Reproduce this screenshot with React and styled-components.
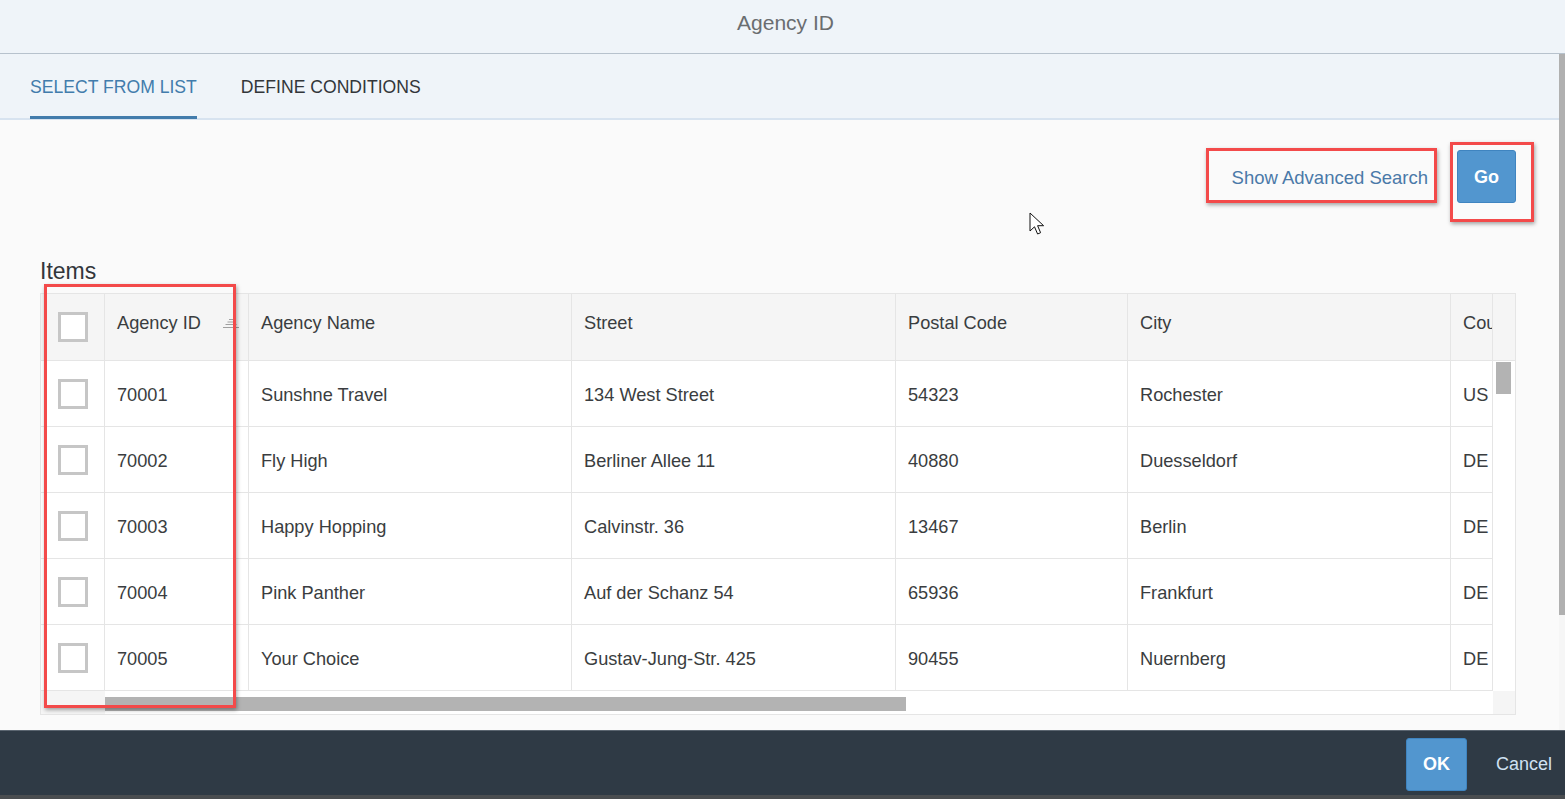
import React from 'react';
import styled, { createGlobalStyle } from 'styled-components';

const GlobalStyle = createGlobalStyle`
  html, body { margin: 0; padding: 0; }
  body { font-family: "Liberation Sans", Arial, sans-serif; overflow: hidden; background: #fafafa; }
  * { box-sizing: border-box; }
`;

const Dialog = styled.div`
  width: 1565px;
  height: 799px;
  display: flex;
  flex-direction: column;
  background: #fafafa;
`;

const Header = styled.header`
  height: 54px;
  flex: none;
  display: flex;
  align-items: center;
  justify-content: center;
  padding-bottom: 7px;
  padding-left: 6px;
  background: #eff4f9;
  border-bottom: 1px solid #b7c2cd;
  color: #6a6d70;
  font-size: 21px;
`;

const Middle = styled.div`
  flex: 1;
  display: flex;
  min-height: 0;
`;

const Main = styled.div`
  flex: 1;
  display: flex;
  flex-direction: column;
  min-width: 0;
`;

const PageScrollbar = styled.div`
  width: 6px;
  flex: none;
  background: #f6f6f6;
`;

const PageThumb = styled.div`
  height: 561px;
  background: #b0b0b0;
`;

const TabBar = styled.nav`
  height: 66px;
  flex: none;
  display: flex;
  gap: 44px;
  padding-left: 30px;
  background: #eff4f9;
  border-bottom: 2px solid #d7e3f0;
`;

const Tab = styled.div`
  display: flex;
  align-items: center;
  font-size: 17.6px;
  padding-top: 5px;
  color: ${p => (p.$active ? '#427cac' : '#32363a')};
  border-bottom: 3px solid ${p => (p.$active ? '#427cac' : 'transparent')};
  margin-bottom: -1px;
`;

const Content = styled.section`
  position: relative;
  flex: 1;
  display: flex;
  flex-direction: column;
  padding: 28px 43px 0 40px;
`;

const Toolbar = styled.div`
  display: flex;
  justify-content: flex-end;
  align-items: flex-start;
  gap: 20px;
`;

const Marked = styled.div`
  position: relative;
`;

const Highlight = styled.div`
  position: absolute;
  top: ${p => p.$top}px;
  left: ${p => p.$left}px;
  right: ${p => p.$right}px;
  bottom: ${p => p.$bottom}px;
  border: 3px solid #f34a4a;
  box-shadow: 1px 2px 4px rgba(0, 0, 0, 0.35);
  pointer-events: none;
`;

const LinkButton = styled.button`
  height: 55px;
  padding: 4px 9px 0 26px;
  border: none;
  background: transparent;
  font-family: inherit;
  font-size: 18.5px;
  color: #4a79a8;
  cursor: pointer;
`;

const PrimaryButton = styled.button`
  width: ${p => p.$w}px;
  height: 53px;
  margin-top: ${p => p.$mt || 0}px;
  padding-top: 2px;
  border: 1px solid #3f84c0;
  border-radius: 3px;
  background: #5296cf;
  color: #ffffff;
  font-family: inherit;
  font-size: 18px;
  font-weight: bold;
`;

const SectionTitle = styled.h2`
  margin: 54px 0 8px;
  font-size: 23px;
  line-height: 28px;
  font-weight: normal;
  color: #32363a;
`;

const TableWrap = styled.div`
  position: relative;
`;

const Table = styled.div`
  border: 1px solid #e5e5e5;
  background: #fff;
`;

const cols = '64px 144px 323px 324px 232px 323px 42px';

const HeaderRow = styled.div`
  display: grid;
  grid-template-columns: ${cols} 22px;
  height: 67px;
  background: #f5f5f5;
  border-bottom: 1px solid #e5e5e5;
`;

const BodyArea = styled.div`
  display: flex;
`;

const Rows = styled.div`
  display: flex;
  flex-direction: column;
`;

const Row = styled.div`
  display: grid;
  grid-template-columns: ${cols};
  height: 66px;
  border-bottom: 1px solid #e5e5e5;
`;

const Cell = styled.div`
  display: flex;
  align-items: center;
  justify-content: ${p => (p.$center ? 'center' : 'space-between')};
  padding-left: ${p => (p.$center ? 0 : 12)}px;
  padding-right: ${p => (p.$sort ? 9 : 0)}px;
  padding-top: ${p => (p.$head || p.$center ? 0 : 4)}px;
  padding-bottom: ${p => (p.$head && !p.$center ? 7 : 0)}px;
  border-right: ${p => (p.$noBorder ? 'none' : '1px solid #e5e5e5')};
  font-size: 18.2px;
  color: #3a3d40;
  white-space: nowrap;
  overflow: hidden;
`;

const Checkbox = styled.div`
  width: 30px;
  height: 30px;
  border: 3px solid #c6c6c6;
  background: #fff;
`;

const VScroll = styled.div`
  width: 22px;
  padding: 1px 0 0 3px;
  background: #fff;
`;

const VThumb = styled.div`
  width: 15px;
  height: 32px;
  background: #b3b3b3;
`;

const HScrollRow = styled.div`
  display: flex;
  height: 23px;
`;

const ScrollCorner = styled.div`
  width: ${p => p.$w}px;
  background: #f5f5f5;
`;

const HTrack = styled.div`
  flex: 1;
  padding-top: 6px;
  background: #fff;
`;

const HThumb = styled.div`
  width: 801px;
  height: 14px;
  background: #b3b3b3;
`;

const Cursor = styled.svg`
  position: absolute;
  left: 1029px;
  top: 92px;
`;

const Footer = styled.footer`
  height: 65px;
  flex: none;
  display: flex;
  justify-content: flex-end;
  align-items: center;
  gap: 16px;
  padding-top: 2px;
  background: #2f3a45;
  border-top: 1px solid #5b6570;
`;

const GhostButton = styled.button`
  height: 53px;
  padding: 0 13px;
  border: none;
  background: transparent;
  font-family: inherit;
  font-size: 18px;
  color: #cfe1f3;
`;

const BottomEdge = styled.div`
  height: 4px;
  flex: none;
  background: #4a4d50;
`;

const SortIcon = () => (
  <svg width="16" height="11" viewBox="0 0 16 11">
    <g stroke="#a0a0a0" strokeWidth="1">
      <line x1="6" y1="1.5" x2="10" y2="1.5" />
      <line x1="4.5" y1="4" x2="11.5" y2="4" />
      <line x1="2.5" y1="6.5" x2="13.5" y2="6.5" />
      <line x1="0" y1="9.5" x2="16" y2="9.5" />
    </g>
  </svg>
);

const rows = [
  ['70001', 'Sunshne Travel', '134 West Street', '54323', 'Rochester', 'US'],
  ['70002', 'Fly High', 'Berliner Allee 11', '40880', 'Duesseldorf', 'DE'],
  ['70003', 'Happy Hopping', 'Calvinstr. 36', '13467', 'Berlin', 'DE'],
  ['70004', 'Pink Panther', 'Auf der Schanz 54', '65936', 'Frankfurt', 'DE'],
  ['70005', 'Your Choice', 'Gustav-Jung-Str. 425', '90455', 'Nuernberg', 'DE'],
];

export default function App() {
  return (
    <Dialog>
      <GlobalStyle />
      <Header>Agency ID</Header>
      <Middle>
        <Main>
          <TabBar>
            <Tab $active>SELECT FROM LIST</Tab>
            <Tab>DEFINE CONDITIONS</Tab>
          </TabBar>
          <Content>
            <Toolbar>
              <Marked>
                <LinkButton>Show Advanced Search</LinkButton>
                <Highlight $top={0} $left={0} $right={0} $bottom={0} />
              </Marked>
              <Marked>
                <PrimaryButton $w={59} $mt={2}>Go</PrimaryButton>
                <Highlight $top={-6} $left={-7} $right={-18} $bottom={-19} />
              </Marked>
            </Toolbar>
            <SectionTitle>Items</SectionTitle>
            <TableWrap>
              <Table>
                <HeaderRow>
                  <Cell $head $center><Checkbox /></Cell>
                  <Cell $head $sort>Agency ID<SortIcon /></Cell>
                  <Cell $head>Agency Name</Cell>
                  <Cell $head>Street</Cell>
                  <Cell $head>Postal Code</Cell>
                  <Cell $head>City</Cell>
                  <Cell $head>Country</Cell>
                  <Cell $head $noBorder />
                </HeaderRow>
                <BodyArea>
                  <Rows>
                    {rows.map(r => (
                      <Row key={r[0]}>
                        <Cell $center><Checkbox /></Cell>
                        {r.map((v, i) => (
                          <Cell key={i}>{v}</Cell>
                        ))}
                      </Row>
                    ))}
                  </Rows>
                  <VScroll>
                    <VThumb />
                  </VScroll>
                </BodyArea>
                <HScrollRow>
                  <ScrollCorner $w={64} />
                  <HTrack>
                    <HThumb />
                  </HTrack>
                  <ScrollCorner $w={22} />
                </HScrollRow>
              </Table>
              <Highlight $top={-9} $left={4} $right={1280} $bottom={7} />
            </TableWrap>
            <Cursor width="18" height="26" viewBox="0 0 18 26">
              <path d="M1 1 L1 19 L5.5 14.8 L8.6 22 L11.6 20.7 L8.6 13.7 L14.6 13.7 Z" fill="#fff" stroke="#111" strokeWidth="1" strokeLinejoin="round" />
            </Cursor>
          </Content>
        </Main>
        <PageScrollbar>
          <PageThumb />
        </PageScrollbar>
      </Middle>
      <Footer>
        <PrimaryButton $w={61}>OK</PrimaryButton>
        <GhostButton>Cancel</GhostButton>
      </Footer>
      <BottomEdge />
    </Dialog>
  );
}
